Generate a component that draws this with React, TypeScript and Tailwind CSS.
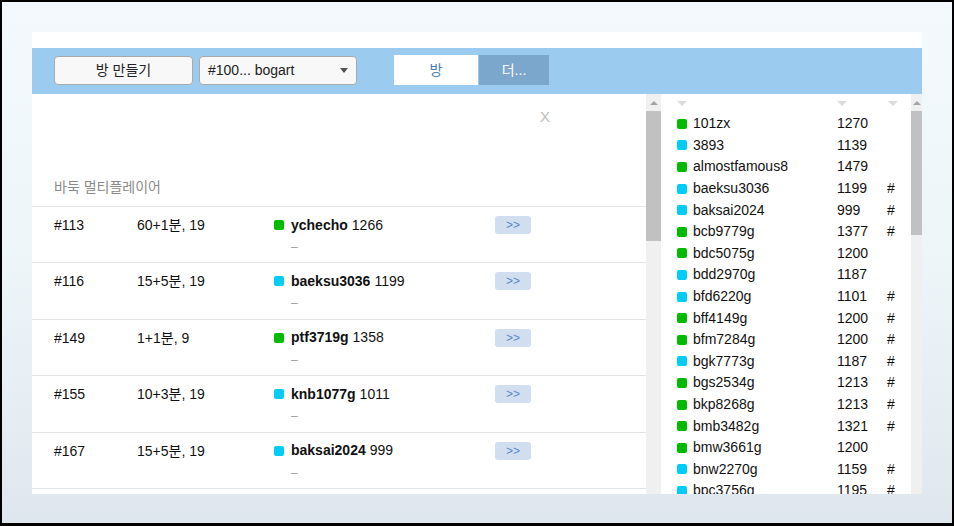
import React from 'react';

type Room = {
  id: string;
  time: string;
  name: string;
  rating: number;
  color: 'green' | 'cyan';
};

type Player = {
  name: string;
  rating: number;
  color: 'green' | 'cyan';
  mark?: boolean;
};

const rooms: Room[] = [
  { id: '#113', time: '60+1분, 19', name: 'ychecho', rating: 1266, color: 'green' },
  { id: '#116', time: '15+5분, 19', name: 'baeksu3036', rating: 1199, color: 'cyan' },
  { id: '#149', time: '1+1분, 9', name: 'ptf3719g', rating: 1358, color: 'green' },
  { id: '#155', time: '10+3분, 19', name: 'knb1077g', rating: 1011, color: 'cyan' },
  { id: '#167', time: '15+5분, 19', name: 'baksai2024', rating: 999, color: 'cyan' },
];

const players: Player[] = [
  { name: '101zx', rating: 1270, color: 'green' },
  { name: '3893', rating: 1139, color: 'cyan' },
  { name: 'almostfamous8', rating: 1479, color: 'green' },
  { name: 'baeksu3036', rating: 1199, color: 'cyan', mark: true },
  { name: 'baksai2024', rating: 999, color: 'cyan', mark: true },
  { name: 'bcb9779g', rating: 1377, color: 'green', mark: true },
  { name: 'bdc5075g', rating: 1200, color: 'green' },
  { name: 'bdd2970g', rating: 1187, color: 'cyan' },
  { name: 'bfd6220g', rating: 1101, color: 'cyan', mark: true },
  { name: 'bff4149g', rating: 1200, color: 'green', mark: true },
  { name: 'bfm7284g', rating: 1200, color: 'green', mark: true },
  { name: 'bgk7773g', rating: 1187, color: 'cyan', mark: true },
  { name: 'bgs2534g', rating: 1213, color: 'green', mark: true },
  { name: 'bkp8268g', rating: 1213, color: 'green', mark: true },
  { name: 'bmb3482g', rating: 1321, color: 'green', mark: true },
  { name: 'bmw3661g', rating: 1200, color: 'green' },
  { name: 'bnw2270g', rating: 1159, color: 'cyan', mark: true },
  { name: 'bpc3756g', rating: 1195, color: 'cyan', mark: true },
];

function Dot({ color }: { color: 'green' | 'cyan' }) {
  return (
    <span
      className={`inline-block w-[10px] h-[10px] rounded-[2px] shrink-0 ${
        color === 'green' ? 'bg-[#00bb00]' : 'bg-[#00ccf5]'
      }`}
    />
  );
}

function Scrollbar({ width, thumb }: { width: string; thumb: string }) {
  return (
    <div className={`${width} h-full bg-[#f0f0f0] flex flex-col items-center shrink-0`}>
      <div className="h-[17px] w-full flex items-center justify-center">
        <span className="w-0 h-0 border-l-[4px] border-r-[4px] border-b-[4px] border-l-transparent border-r-transparent border-b-[#a3a3a3]" />
      </div>
      <div className={`${thumb} w-full bg-[#c1c1c1]`} />
    </div>
  );
}

function Caret({ className = '' }: { className?: string }) {
  return (
    <span
      className={`inline-block w-0 h-0 border-l-[5px] border-r-[5px] border-t-[5px] border-l-transparent border-r-transparent border-t-[#dcdcdc] ${className}`}
    />
  );
}

export default function App() {
  return (
    <div
      className="w-[954px] h-[526px] bg-black pt-[2px] pl-[2px] pr-[2px] pb-[3px] overflow-hidden"
      style={{ fontFamily: '"Liberation Sans", Arial, "Noto Sans CJK KR", sans-serif' }}
    >
      <div className="w-full h-full bg-gradient-to-b from-[#f3f9fc] via-[#eef5f9] to-[#dfe7ee] pl-[30px] pt-[30px]">
        <div className="w-[890px] h-[462px] bg-white flex flex-col overflow-hidden">
          <div className="h-[16px] shrink-0" />

          {/* toolbar */}
          <div className="h-[46px] shrink-0 bg-[#9bcbee] flex items-center pl-[22px]">
            <button className="w-[139px] h-[29px] rounded-[4px] border border-[#a9a9a9] bg-[#f8f8f8] text-[14px] text-[#222] mt-[-1px]">
              방 만들기
            </button>
            <div className="ml-[6px] w-[158px] h-[29px] rounded-[4px] border border-[#a9a9a9] bg-[#f8f8f8] flex items-center justify-between pl-[8px] pr-[8px] text-[14px] text-[#222] mt-[-1px]">
              <span>#100... bogart</span>
              <span className="w-0 h-0 border-l-[4px] border-r-[4px] border-t-[5px] border-l-transparent border-r-transparent border-t-[#555]" />
            </div>
            <div className="ml-[37px] flex h-[30px] mt-[-2px]">
              <div className="w-[84px] h-full bg-white flex items-center justify-center text-[14px] text-[#4a7fb5]">
                방
              </div>
              <div className="ml-[1px] w-[70px] h-full bg-[#7ba7cc] flex items-center justify-center text-[14px] text-white">
                더...
              </div>
            </div>
          </div>

          {/* body */}
          <div className="flex flex-1 min-h-0">
            <div className="w-[614px] shrink-0 flex flex-col">
              <div className="h-[113px] shrink-0 relative border-b border-[#e4e4e4]">
                <span className="absolute left-[508px] top-[12px] text-[15px] text-[#bdbdbd]">X</span>
                <div className="absolute left-[22px] top-[83px] text-[14px] text-[#8a8a8a]">
                  바둑 멀티플레이어
                </div>
              </div>
              {rooms.map((r) => (
                <div
                  key={r.id}
                  className="h-[56.4px] shrink-0 border-b border-[#e4e4e4] flex items-start pt-[9px] text-[14px] text-[#111]"
                >
                  <div className="w-[105px] pl-[22px] leading-[18px] shrink-0">{r.id}</div>
                  <div className="w-[137px] leading-[18px] shrink-0">{r.time}</div>
                  <div className="w-[221px] shrink-0 flex flex-col">
                    <div className="flex items-center h-[18px]">
                      <Dot color={r.color} />
                      <span className="ml-[7px] font-bold">{r.name}</span>
                      <span className="ml-[4px]">{r.rating}</span>
                    </div>
                    <div className="pl-[17px] mt-[6px] leading-[14px] text-[12px] text-[#a0a0a0]">–</div>
                  </div>
                  <button className="w-[36px] h-[18px] rounded-[3px] bg-[#d1deef] text-[12px] text-[#5e86c4] leading-[18px]">
                    &gt;&gt;
                  </button>
                </div>
              ))}
            </div>

            <Scrollbar width="w-[15px]" thumb="h-[130px]" />

            {/* player list */}
            <div className="w-[250px] shrink-0 flex flex-col text-[14px] text-[#111] pl-[16px]">
              <div className="h-[19px] flex items-center shrink-0">
                <Caret className="ml-[0px]" />
                <Caret className="ml-[150px]" />
                <Caret className="ml-[41px]" />
              </div>
              {players.map((p) => (
                <div key={p.name} className="h-[21.6px] shrink-0 flex items-center">
                  <Dot color={p.color} />
                  <span className="ml-[6px] w-[144px]">{p.name}</span>
                  <span className="w-[50px]">{p.rating}</span>
                  <span>{p.mark ? '#' : ''}</span>
                </div>
              ))}
            </div>

            <Scrollbar width="w-[11px]" thumb="h-[124px]" />
          </div>
        </div>
      </div>
    </div>
  );
}
